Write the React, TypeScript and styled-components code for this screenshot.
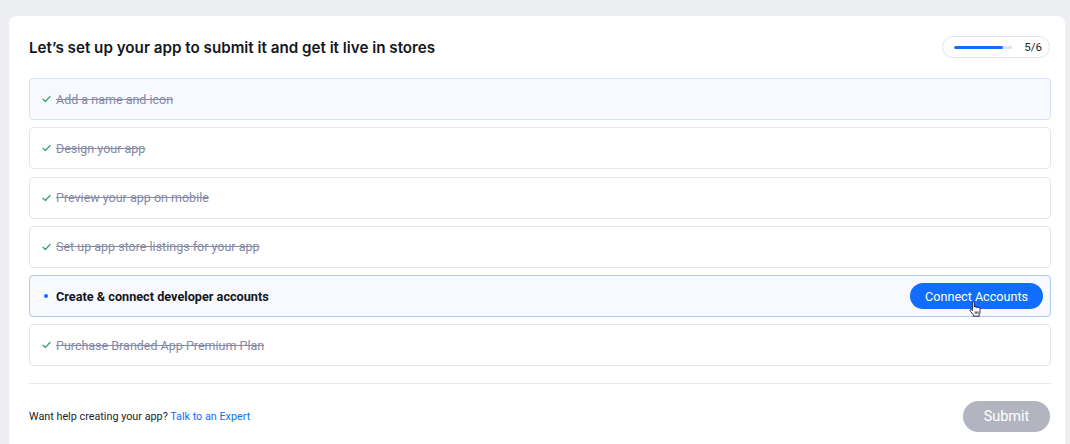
import React from "react";
import styled, { createGlobalStyle, css } from "styled-components";

const Global = createGlobalStyle`
  html, body { margin: 0; padding: 0; background: #eceef2; }
  body { font-family: "Roboto", "Noto Sans", sans-serif; -webkit-font-smoothing: antialiased; }
  #root { height: 444px; overflow: hidden; }
`;

const Page = styled.div`
  padding: 16px 5px 0 9px;
  height: 444px;
  box-sizing: border-box;
`;

const Card = styled.div`
  background: #ffffff;
  border-radius: 8px 8px 0 0;
  padding: 20px 14px 0 20px;
  height: 440px;
  box-sizing: border-box;
`;

const Header = styled.div`
  display: flex;
  align-items: center;
  justify-content: space-between;
  height: 22px;
`;

const Title = styled.h1`
  margin: 0;
  font-family: "Inter", "Roboto", sans-serif;
  font-size: 15.2px;
  font-weight: 600;
  color: #131720;
`;

const Progress = styled.div`
  display: flex;
  align-items: center;
  gap: 12px;
  height: 20px;
  padding: 0 7px 0 11px;
  margin-right: 1px;
  border: 1px solid #e3e5ea;
  border-radius: 12px;
`;

const Track = styled.div`
  width: 58px;
  height: 3px;
  border-radius: 2px;
  background: #e1e3e8;
  overflow: hidden;
`;

const Fill = styled.div`
  height: 100%;
  background: #116dff;
  border-radius: 2px;
`;

const Count = styled.span`
  font-size: 11.5px;
  color: #20242c;
`;

const List = styled.div`
  display: flex;
  flex-direction: column;
  gap: 7.25px;
  margin-top: 20px;
`;

const Row = styled.div<{ $variant: "done" | "doneActive" | "active" }>`
  display: flex;
  align-items: center;
  height: 42px;
  box-sizing: border-box;
  padding: 0 7px 0 10px;
  border-radius: 4px;
  border: 1px solid #e4e6eb;
  background: #ffffff;
  ${(p) =>
    p.$variant === "doneActive" &&
    css`
      border-color: #d5e2fa;
      background: #f7f9ff;
    `}
  ${(p) =>
    p.$variant === "active" &&
    css`
      border-color: #a9c6f7;
      background: #f7f9ff;
    `}
`;

const Marker = styled.span`
  width: 12px;
  display: flex;
  align-items: center;
  justify-content: center;
  margin-right: 4px;
`;

const Dot = styled.span`
  width: 4px;
  height: 4px;
  border-radius: 50%;
  background: #116dff;
`;

const Label = styled.span<{ $done: boolean }>`
  ${(p) =>
    p.$done
      ? css`
          font-size: 12.5px;
          color: #868aa5;
          text-decoration: line-through;
          text-decoration-color: #868aa5;
        `
      : css`
          font-size: 12.7px;
          color: #131720;
          font-weight: 700;
        `}
`;

const Spacer = styled.div`
  flex: 1;
`;

const PrimaryButton = styled.button`
  position: relative;
  height: 26px;
  padding: 0 15px;
  border: none;
  border-radius: 13px;
  background: #116dff;
  color: #fff;
  font-family: inherit;
  font-size: 12.6px;
  cursor: pointer;
`;

const Cursor = styled.svg`
  position: absolute;
  left: 59px;
  top: 18px;
  pointer-events: none;
`;

const Divider = styled.hr`
  margin: 17px 0 0 0;
  border: none;
  border-top: 1px solid #e6e8ec;
`;

const Footer = styled.div`
  display: flex;
  align-items: center;
  justify-content: space-between;
  margin-top: 17px;
  padding-right: 1px;
`;

const Help = styled.span`
  font-size: 10.8px;
  color: #20242c;
`;

const Link = styled.a`
  color: #116dff;
  text-decoration: none;
`;

const SubmitButton = styled.button`
  height: 31px;
  width: 87px;
  border: none;
  border-radius: 16px;
  background: #b2b5bf;
  color: #fff;
  font-family: inherit;
  font-size: 14.5px;
`;

const Check = () => (
  <svg width="9" height="8" viewBox="0 0 9 8" fill="none">
    <path d="M1 4.2 L3.4 6.5 L8 1.5" stroke="#33a36b" strokeWidth="1.2" strokeLinecap="round" strokeLinejoin="round" />
  </svg>
);

const HandCursor = () => (
  <Cursor width="12" height="16" viewBox="-0.5 -0.5 12.5 16">
    <path
      d="M3 1 Q3 0 4 0 Q5 0 5 1 V5.5 Q5 4.8 6 4.8 Q7 4.8 7 5.5 V6 Q7 5.3 8 5.3 Q9 5.3 9 6 V6.5 Q9 5.8 10 5.8 Q11 5.8 11 6.8 V10.5 Q11 12 10 13.5 V15 H4 V13.5 L1 10 Q0 8.8 0.8 8.2 Q1.6 7.7 2.4 8.5 L3 9.2 Z"
      fill="#fff"
      stroke="#111"
      strokeWidth="0.9"
      strokeLinejoin="round"
    />
    <path d="M6 10 V12.5 M7.5 10 V12.5 M9 10 V12.5" stroke="#111" strokeWidth="0.8" />
  </Cursor>
);

const steps: { label: string; variant: "done" | "doneActive" | "active" }[] = [
  { label: "Add a name and icon", variant: "doneActive" },
  { label: "Design your app", variant: "done" },
  { label: "Preview your app on mobile", variant: "done" },
  { label: "Set up app store listings for your app", variant: "done" },
  { label: "Create & connect developer accounts", variant: "active" },
  { label: "Purchase Branded App Premium Plan", variant: "done" },
];

export default function App() {
  return (
    <>
      <Global />
      <Page>
        <Card>
          <Header>
            <Title>Let’s set up your app to submit it and get it live in stores</Title>
            <Progress>
              <Track>
                <Fill style={{ width: `${(5 / 6) * 100}%` }} />
              </Track>
              <Count>5/6</Count>
            </Progress>
          </Header>
          <List>
            {steps.map((s) => (
              <Row key={s.label} $variant={s.variant}>
                <Marker>{s.variant === "active" ? <Dot /> : <Check />}</Marker>
                <Label $done={s.variant !== "active"}>{s.label}</Label>
                {s.variant === "active" && (
                  <>
                    <Spacer />
                    <PrimaryButton>
                      Connect Accounts
                      <HandCursor />
                    </PrimaryButton>
                  </>
                )}
              </Row>
            ))}
          </List>
          <Divider />
          <Footer>
            <Help>
              Want help creating your app? <Link href="#">Talk to an Expert</Link>
            </Help>
            <SubmitButton>Submit</SubmitButton>
          </Footer>
        </Card>
      </Page>
    </>
  );
}
